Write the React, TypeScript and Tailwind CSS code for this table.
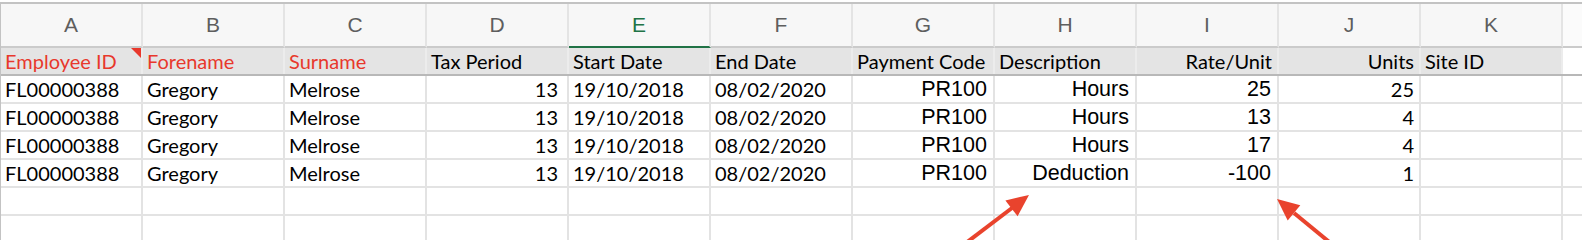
import React from 'react'

type Col = {
  letter: string
  header: string
  red?: boolean
  headerRight?: boolean
  right?: boolean
  arial?: boolean
  pad?: string
}

const cols: Col[] = [
  { letter: 'A', header: 'Employee ID', red: true },
  { letter: 'B', header: 'Forename', red: true },
  { letter: 'C', header: 'Surname', red: true },
  { letter: 'D', header: 'Tax Period', right: true, pad: 'pr-[9px]' },
  { letter: 'E', header: 'Start Date' },
  { letter: 'F', header: 'End Date' },
  { letter: 'G', header: 'Payment Code', right: true, arial: true, pad: 'pr-[6px]' },
  { letter: 'H', header: 'Description', right: true, arial: true, pad: 'pr-[6px]' },
  { letter: 'I', header: 'Rate/Unit', headerRight: true, right: true, arial: true, pad: 'pr-[6px]' },
  { letter: 'J', header: 'Units', headerRight: true, right: true, pad: 'pr-[5px]' },
  { letter: 'K', header: 'Site ID' },
]

const rows: string[][] = [
  ['FL00000388', 'Gregory', 'Melrose', '13', '19/10/2018', '08/02/2020', 'PR100', 'Hours', '25', '25', ''],
  ['FL00000388', 'Gregory', 'Melrose', '13', '19/10/2018', '08/02/2020', 'PR100', 'Hours', '13', '4', ''],
  ['FL00000388', 'Gregory', 'Melrose', '13', '19/10/2018', '08/02/2020', 'PR100', 'Hours', '17', '4', ''],
  ['FL00000388', 'Gregory', 'Melrose', '13', '19/10/2018', '08/02/2020', 'PR100', 'Deduction', '-100', '1', ''],
  ['', '', '', '', '', '', '', '', '', '', ''],
  ['', '', '', '', '', '', '', '', '', '', ''],
]

const calibri = "font-['Lato','Noto_Sans',sans-serif] text-[20px]"
const arial = "font-['Liberation_Sans',Arial,sans-serif] text-[21.5px]"

export default function App() {
  return (
    <div className="relative h-[240px] w-[1582px] overflow-hidden bg-white pt-[2px]">
      <div className="border-t-2 border-l border-[#c3c3c3]">
        {/* column letters */}
        <div className="flex h-[44px] bg-[#f7f7f7]">
          {cols.map((c) => (
            <div
              key={c.letter}
              className={`flex w-[142px] shrink-0 items-center justify-center border-r-2 border-b-2 border-r-[#e4e4e4] font-['Liberation_Sans',Arial,sans-serif] text-[21px] ${
                c.letter === 'E' ? 'border-b-[#217346] text-[#217346]' : 'border-b-[#cbcbcb] text-[#5e5e5e]'
              }`}
            >
              {c.letter}
            </div>
          ))}
          <div className="flex-1 border-b-2 border-[#cbcbcb] bg-[#fbfbfb]" />
        </div>

        {/* header row */}
        <div className="flex h-[28px] border-b-2 border-[#b8b8b8]">
          {cols.map((c, i) => (
            <div
              key={c.header}
              className={`relative w-[142px] shrink-0 truncate border-r-2 border-[#ececec] bg-[#e4e4e4] leading-[26px] ${calibri} ${
                c.red ? 'text-[#e8382c]' : 'text-black'
              } ${c.headerRight ? 'pr-[5px] text-right' : 'pl-[4px] text-left'}`}
            >
              {c.header}
              {i === 0 && (
                <span className="absolute top-0 right-0 h-0 w-0 border-t-[10px] border-l-[10px] border-t-[#e8382c] border-l-transparent" />
              )}
            </div>
          ))}
          <div className="flex-1" />
        </div>

        {/* data rows */}
        {rows.map((r, ri) => (
          <div key={ri} className="flex h-[28px] border-b-2 border-[#e3e3e3]">
            {cols.map((c, ci) => (
              <div
                key={c.letter}
                className={`w-[142px] shrink-0 truncate border-r-2 border-[#e3e3e3] leading-[26px] text-black ${
                  c.arial ? arial : calibri
                } ${c.right ? `${c.pad} text-right` : 'pl-[4px] text-left'}`}
              >
                {r[ci]}
              </div>
            ))}
            <div className="flex-1" />
          </div>
        ))}
      </div>

      {/* annotation arrows */}
      <svg className="pointer-events-none absolute inset-0" width="1582" height="240" viewBox="0 0 1582 240">
        <line x1="958" y1="249" x2="1012" y2="208" stroke="#e9432d" strokeWidth="4" />
        <polygon points="1029,195 1017.6,216.3 1005.4,200.4" fill="#e9432d" />
        <line x1="1339" y1="250" x2="1294" y2="213" stroke="#e9432d" strokeWidth="4" />
        <polygon points="1277,199 1300.3,205.2 1287.7,220.6" fill="#e9432d" />
      </svg>
    </div>
  )
}
